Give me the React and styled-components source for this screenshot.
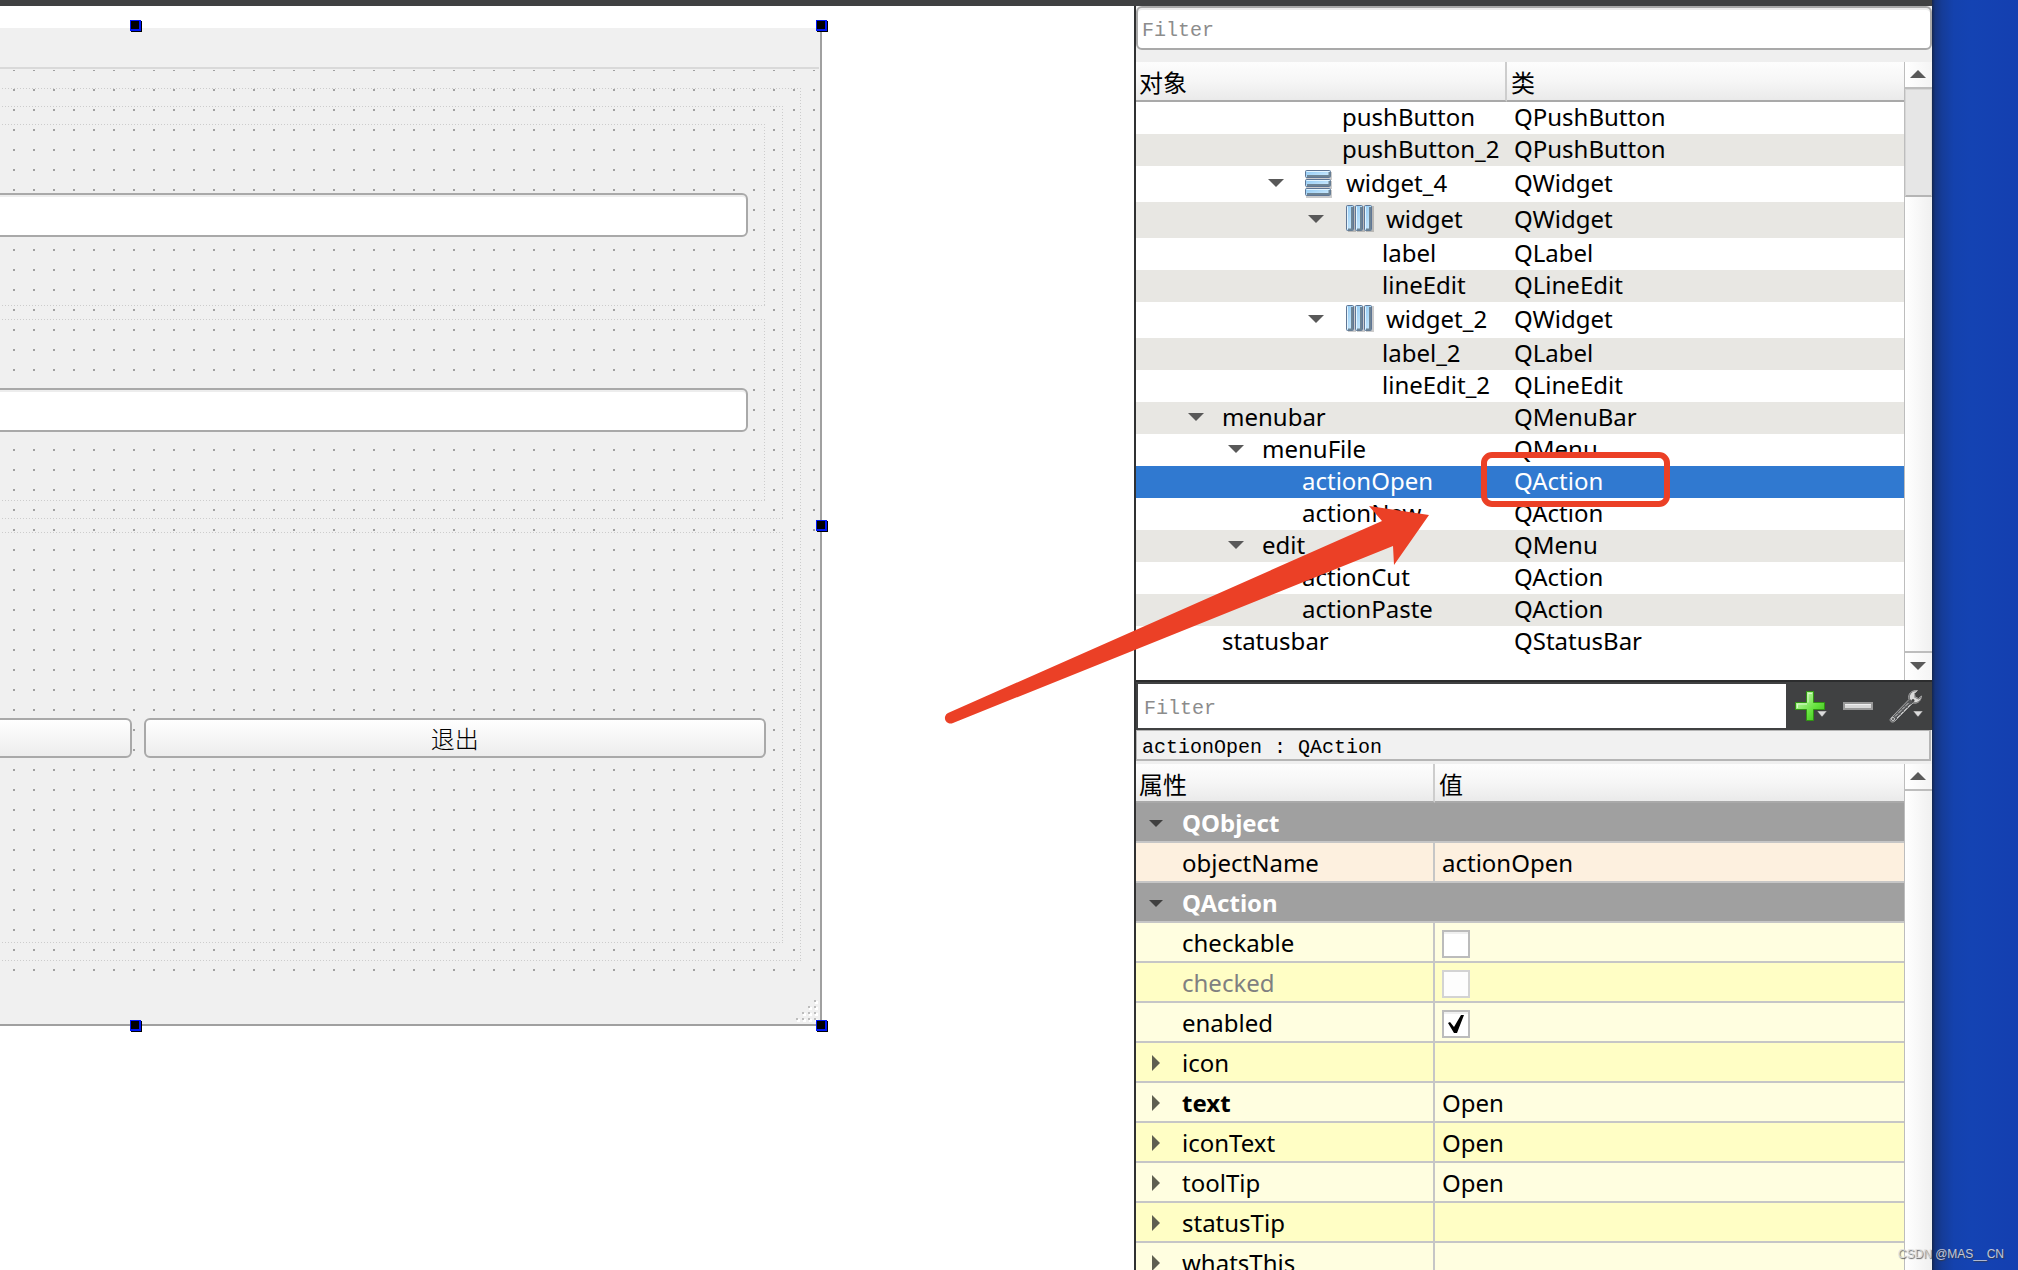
import React from "react";
import styled, { createGlobalStyle, css } from "styled-components";

const uiFont = `"Noto Sans", "Noto Sans CJK SC", sans-serif`;
const monoFont = `"Liberation Mono", "Noto Sans CJK SC", monospace`;

const GlobalStyle = createGlobalStyle`
  * {
    box-sizing: border-box;
  }

  body {
    margin: 0;
    font: 24px/32px ${uiFont};
    color: #000000;
  }
`;

const Page = styled.div`
  height: 100vh;
  overflow: hidden;
  position: relative;

  display: flex;

  background: #1442b2;
`;

const Window = styled.div`
  flex: 1;
  min-width: 0;

  display: flex;
  flex-direction: column;

  border-top: 6px solid #404142;
  background: #ffffff;
`;

const Workspace = styled.div`
  flex: 1;
  min-height: 0;

  display: flex;
`;

const Desktop = styled.div`
  width: 86px;
  flex-shrink: 0;

  background: linear-gradient(
    90deg,
    #14264f 0,
    #15347d 3px,
    #153c98 10px,
    #1442ae 22px,
    #1443b3 40px,
    #143fb0 100%
  );
`;

/* form being edited */

const Canvas = styled.main`
  flex: 1;
  min-width: 0;
  overflow: hidden;

  padding-top: 22px;
`;

const Form = styled.section`
  position: relative;
  width: 1370px;
  margin-left: -548px;

  border-right: 2px solid #a0a0a0;
  border-bottom: 2px solid #a0a0a0;
  background: #f0f0f0;
`;

const FormMenuBar = styled.div`
  height: 41px;
  margin-right: 1px;

  border-bottom: 2px solid #d9d9d9;
`;

const FormBody = styled.div`
  margin-top: 1px;
  padding: 18px 19px 17px 22px;

  background-image: conic-gradient(
    from 90deg at 18px 18px,
    #a0a0a0 90deg,
    transparent 90deg
  );
  background-size: 20px 20px;
  background-position: 3px 1px;
`;

const FormStatusBar = styled.div`
  height: 46px;

  display: flex;
  justify-content: flex-end;
  align-items: flex-end;

  background: #f0f0f0;
`;

const dottedLine = (angle) =>
  `linear-gradient(${angle}, #cccccc 1px, transparent 1px)`;

const LayoutFrame = styled.div`
  display: flex;
  flex-direction: ${(props) => (props.$row ? "row" : "column")};
  align-items: ${(props) => (props.$row ? "center" : "stretch")};
  gap: ${(props) => (props.$row ? 12 : 13)}px;

  height: ${(props) => (props.$height ? `${props.$height}px` : "auto")};
  padding: ${(props) => (props.$row ? "0 17px" : "18px")};

  background-image: ${dottedLine("90deg")}, ${dottedLine("90deg")},
    ${dottedLine("180deg")}, ${dottedLine("180deg")};
  background-size: 3px 1px, 3px 1px, 1px 3px, 1px 3px;
  background-position: left top, left bottom, left top, right top;
  background-repeat: repeat-x, repeat-x, repeat-y, repeat-y;
`;

const LineEdit = styled.input`
  width: 100%;
  height: 44px;
  padding: 4px 4px 0;

  border: 2px solid #a9a9a9;
  border-radius: 6px;
  outline: none;
  background: #ffffff;
  box-shadow: inset 0 2px 0 #ededed;

  font: 20px/24px ${monoFont};

  &::placeholder {
    color: #8c8c8c;
    opacity: 1;
  }
`;

const PushButton = styled.button`
  flex: 1;
  height: 40px;
  padding: 0;

  border: 2px solid #a9a9a9;
  border-radius: 6px;
  background: linear-gradient(#ffffff, #ededed);

  font: 300 24px/32px "Noto Sans CJK SC", sans-serif;
  color: #000000;
`;

const Handle = styled.span`
  position: absolute;
  width: 11px;
  height: 11px;
  margin: -6px;

  border: solid #0018f5;
  border-width: 1px 2px 2px 1px;
  background: #000000;
  box-shadow: 1px 1px 0 #000000;

  left: ${(props) => props.$left};
  top: ${(props) => props.$top};
`;

/* docked panels */

const Docks = styled.aside`
  position: relative;
  width: 798px;
  flex-shrink: 0;

  display: flex;
  flex-direction: column;

  border-left: 2px solid #303132;
  background: #efefef;
`;

const Inspector = styled.section`
  display: flex;
  height: 618px;
  margin-top: 12px;

  background: #ffffff;
`;

const PropertyEditor = styled.section`
  flex: 1;
  min-height: 0;
  overflow: hidden;

  display: flex;
  margin-top: 3px;
`;

const Scroller = styled.div`
  flex: 1;
  min-width: 0;
`;

const Table = styled.table`
  width: 100%;
  table-layout: fixed;
  border-collapse: separate;
  border-spacing: 0;
`;

const HeaderCell = styled.th`
  width: ${(props) => (props.$width ? `${props.$width}px` : "auto")};
  height: ${(props) => props.$height}px;
  padding: 2px 4px 0 ${(props) => (props.$width ? 3 : 4)}px;

  border-bottom: 2px solid #a9a9a9;
  ${(props) => props.$width && "border-right: 2px solid #cdcdcd;"}
  background: linear-gradient(#fdfdfd, #f6f6f6 50%, #eaeaea);

  font: 400 24px/32px "Noto Sans CJK SC", sans-serif;
  text-align: left;
`;

const TreeRow = styled.tr`
  height: ${(props) => (props.$tall ? 36 : 32)}px;

  background: ${(props) => (props.$striped ? "#e8e7e3" : "#ffffff")};

  ${(props) =>
    props.$selected &&
    css`
      background: #3079d0;
      color: #ffffff;
    `}
`;

const TreeCell = styled.td`
  padding: 0 0 0 7px;
  line-height: 30px;
  vertical-align: top;
  white-space: nowrap;
`;

const TreeName = styled.div`
  display: flex;
  align-items: center;
  height: ${(props) => (props.$tall ? 34 : 30)}px;
  padding-left: ${(props) => (props.$level - 1) * 40}px;
`;

const NameCell = styled(TreeCell)`
  padding: 0;
`;

const ClassCell = styled(TreeCell)`
  line-height: ${(props) => (props.$tall ? 34 : 30)}px;
`;

const Branch = styled.span`
  width: 40px;
  margin-right: 6px;

  display: flex;
  justify-content: center;
`;

const LayoutIcon = styled.svg`
  width: 32px;
  height: 32px;
  margin: 2px 10px 0 2px;
`;

const Track = styled.div`
  width: 28px;
  flex-shrink: 0;

  display: flex;
  flex-direction: column;

  border-left: 1px solid #bdbdbd;
  background: linear-gradient(90deg, #ffffff, #f0f0f0);
`;

const ScrollButton = styled.button`
  height: ${(props) => (props.$down ? 29 : 27)}px;
  padding: 0 2px 2px 0;

  display: flex;
  align-items: center;
  justify-content: center;

  border: solid #bdbdbd;
  border-width: ${(props) => (props.$down ? "2px 0 0" : "0 0 2px")};
  background: linear-gradient(90deg, #ffffff, #f4f4f4);
`;

const Thumb = styled.div`
  height: 108px;

  border: 1px solid #d6d6d6;
  border-bottom: 2px solid #b5b5b5;
  background: #e6e6e6;
`;

const Spacer = styled.div`
  flex: 1;
`;

const Toolbar = styled.div`
  display: flex;
  height: 50px;
  padding: 2px;

  border-top: 2px solid #2c2d2e;
  background: #404142;
`;

const ToolbarFilter = styled(LineEdit)`
  flex: 1;
  min-width: 0;
  width: auto;
  padding-left: 6px;

  border: 0;
  border-radius: 0;
  box-shadow: none;
`;

const ToolButton = styled.button`
  width: 48px;
  height: 44px;
  padding: 0;

  border: 0;
  background: none;

  svg {
    display: block;
  }
`;

const ObjectTitle = styled.div`
  height: 31px;
  margin-right: 1px;
  padding: 3px 5px 0;

  border: solid #b5b5b5;
  border-width: 1px 2px 2px 1px;
  background: #f1f1f1;

  font: 20px/28px ${monoFont};
  white-space: pre;
`;

const toneColors = {
  group: "#a0a0a0",
  peach: "#fdf0df",
  light: "#fffee0",
  dark: "#fffec5",
};

const PropertyRow = styled.tr`
  height: 40px;

  background: ${(props) => toneColors[props.$tone]};
  color: ${(props) => (props.$disabled ? "#808080" : "#000000")};
`;

const PropertyCell = styled.td`
  padding: 2px 0 0 ${(props) => (props.$value ? 7 : 0)}px;

  border-bottom: 2px solid #c6c6c6;
  ${(props) => props.$divided && "border-right: 2px solid #c6c6c6;"}
`;

const PropertyName = styled.div`
  display: flex;
  align-items: center;

  font-weight: ${(props) => (props.$bold ? 700 : 400)};
  color: ${(props) => (props.$group ? "#ffffff" : "inherit")};
`;

const Expander = styled.span`
  width: 40px;
  margin-right: 6px;

  display: flex;
  justify-content: center;
`;

const CheckBox = styled.input`
  appearance: none;
  display: block;
  width: 28px;
  height: 28px;
  margin: 2px 0 0;

  border: 2px solid #bcbcbc;
  background: #ffffff;
  box-shadow: inset 0 2px 0 #f0f0f0;

  &:disabled {
    border-color: #d3d3d3;
    background: #fdfdfd;
    box-shadow: none;
  }

  &:checked {
    background: #ffffff
      url("data:image/svg+xml,%3Csvg xmlns='http://www.w3.org/2000/svg' viewBox='0 0 24 24'%3E%3Cpath d='M4 11l2-1 4 5 7-12 3 0-7 18-3 0z'/%3E%3C/svg%3E");
  }
`;

const Markup = styled.svg`
  position: absolute;
  left: -200px;
  top: 434px;
  pointer-events: none;
`;

const Watermark = styled.span`
  position: absolute;
  right: 14px;
  bottom: 8px;

  font: 12px/16px "Liberation Sans", sans-serif;
  color: rgba(225, 225, 225, 0.85);
  text-shadow: 1px 1px 1px rgba(60, 60, 60, 0.8);
`;

const DownArrow = ({ width = 16, height = 8, color = "#595959" }) => (
  <svg width={width} height={height} viewBox="0 0 16 8" preserveAspectRatio="none">
    <path d="M0 0H16L8 8Z" fill={color} />
  </svg>
);

const UpArrow = () => (
  <svg width="16" height="8">
    <path d="M0 8H16L8 0Z" fill="#595959" />
  </svg>
);

const RightArrow = () => (
  <svg width="8" height="16">
    <path d="M0 0V16L8 8Z" fill="#5f5f50" />
  </svg>
);

function BoxIcon({ vertical }) {
  return (
    <LayoutIcon viewBox="0 0 32 32">
      <defs>
        <linearGradient id="bar" x1="0" y1="0" x2="1" y2="1">
          <stop offset="0" stopColor="#8cc8f4" />
          <stop offset="1" stopColor="#d8f0ff" />
        </linearGradient>
      </defs>
      <g transform={vertical ? undefined : "matrix(0 1 1 0 0 0)"}>
        {[3, 12, 21].map((y) => (
          <g key={y}>
            <rect x="2" y={y + 1} width="26" height="8" fill="#000000" opacity="0.2" />
            <rect
              x="1.5"
              y={y - 0.5}
              width="25"
              height="7"
              rx="1"
              fill="url(#bar)"
              stroke="#5f7695"
            />
            <path d={`M3 ${y + 5}H25.500V${y + 1}`} stroke="#6e8494" strokeWidth="2" fill="none" />
            <path d={`M2.500 ${y + 0.5}H25`} stroke="#e4f5ff" />
          </g>
        ))}
      </g>
    </LayoutIcon>
  );
}

const MenuCaret = ({ x }) => (
  <path d={`M${x} 27h10l-5 6z`} fill="#dcdcdc" stroke="#404142" strokeWidth="0.5" />
);

const PlusIcon = () => (
  <svg width="48" height="44">
    <defs>
      <linearGradient id="plus" x1="0" y1="0" x2="1" y2="1">
        <stop offset="0.2" stopColor="#b4f29a" />
        <stop offset="0.6" stopColor="#66e23e" />
        <stop offset="1" stopColor="#36b414" />
      </linearGradient>
    </defs>
    <path
      d="M20.500 7.500h7v11h11v7h-11v11h-7v-11h-11v-7h11z"
      fill="url(#plus)"
      stroke="#2f9412"
    />
    <path d="M22 18.500V9.500h4M11.500 24v-4H21" stroke="#d8f8cc" fill="none" />
    <MenuCaret x={31} />
  </svg>
);

const MinusIcon = () => (
  <svg width="48" height="44">
    <rect x="10" y="19" width="28" height="6" fill="#d8d8d8" stroke="#989898" strokeWidth="2" />
    <path d="M11 20.500H37" stroke="#f0f0f0" />
  </svg>
);

const WrenchIcon = () => (
  <svg width="48" height="44">
    <path
      d="M8.500 34.500L27 15.500C25.500 10.500 29 6 35.500 6.500L32.500 9.500L33 13L36.500 14.500L39.500 12C39 17.500 35 20 31 19L13 37C10 39.500 7 37 8.500 34.500Z"
      fill="#57585a"
      stroke="#a8a8a8"
      strokeWidth="1"
    />
    <path d="M28 15C27 10.500 30 7 35 7L32 9.500L32.500 13.500L36.500 15.500L39 13.500C37.500 18 34 19 31 18Z" fill="#dadada" />
    <path d="M13 32.500L27 18.500M15 34L29 20" stroke="#d0d0d0" strokeWidth="1" strokeDasharray="4 1" />
    <circle cx="31" cy="16.500" r="1.500" fill="#404142" />
    <circle cx="11" cy="35" r="1.500" fill="#404142" stroke="#d0d0d0" />
    <MenuCaret x={31} />
  </svg>
);

const objects = [
  { name: "pushButton", type: "QPushButton", level: 5 },
  { name: "pushButton_2", type: "QPushButton", level: 5 },
  { name: "widget_4", type: "QWidget", level: 4, open: true, icon: "vertical" },
  { name: "widget", type: "QWidget", level: 5, open: true, icon: "horizontal" },
  { name: "label", type: "QLabel", level: 6 },
  { name: "lineEdit", type: "QLineEdit", level: 6 },
  { name: "widget_2", type: "QWidget", level: 5, open: true, icon: "horizontal" },
  { name: "label_2", type: "QLabel", level: 6 },
  { name: "lineEdit_2", type: "QLineEdit", level: 6 },
  { name: "menubar", type: "QMenuBar", level: 2, open: true },
  { name: "menuFile", type: "QMenu", level: 3, open: true },
  { name: "actionOpen", type: "QAction", level: 4, selected: true },
  { name: "actionNew", type: "QAction", level: 4 },
  { name: "edit", type: "QMenu", level: 3, open: true },
  { name: "actionCut", type: "QAction", level: 4 },
  { name: "actionPaste", type: "QAction", level: 4 },
  { name: "statusbar", type: "QStatusBar", level: 2 },
];

const properties = [
  { name: "QObject", tone: "group" },
  { name: "objectName", tone: "peach", value: "actionOpen" },
  { name: "QAction", tone: "group" },
  { name: "checkable", tone: "light", check: true },
  { name: "checked", tone: "dark", check: true, disabled: true },
  { name: "enabled", tone: "light", check: true, checked: true },
  { name: "icon", tone: "dark", expandable: true },
  { name: "text", tone: "light", expandable: true, bold: true, value: "Open" },
  { name: "iconText", tone: "dark", expandable: true, value: "Open" },
  { name: "toolTip", tone: "light", expandable: true, value: "Open" },
  { name: "statusTip", tone: "dark", expandable: true },
  { name: "whatsThis", tone: "light", expandable: true },
];

function SizeGrip() {
  const dots = [
    [18, 0],
    [12, 6],
    [18, 6],
    [6, 12],
    [12, 12],
    [18, 12],
    [0, 18],
    [6, 18],
    [12, 18],
    [18, 18],
  ];

  return (
    <svg width="24" height="24">
      {dots.map(([x, y]) => (
        <g key={`${x}-${y}`}>
          <rect x={x + 1} y={y + 1} width="3" height="3" fill="#ffffff" />
          <rect x={x} y={y} width="2" height="2" fill="#bdbdbd" />
        </g>
      ))}
    </svg>
  );
}

function FormEditor() {
  return (
    <Canvas>
      <Form>
        <FormMenuBar />
        <FormBody>
          <LayoutFrame>
            <LayoutFrame>
              <LayoutFrame $row $height={182}>
                <LineEdit aria-label="lineEdit" />
              </LayoutFrame>
              <LayoutFrame $row $height={182}>
                <LineEdit aria-label="lineEdit_2" />
              </LayoutFrame>
            </LayoutFrame>
            <LayoutFrame $row $height={411}>
              <PushButton aria-label="pushButton" />
              <PushButton>退出</PushButton>
            </LayoutFrame>
          </LayoutFrame>
        </FormBody>
        <FormStatusBar>
          <SizeGrip />
        </FormStatusBar>
        <Handle $left="50%" $top="-2px" />
        <Handle $left="calc(100% + 2px)" $top="-2px" />
        <Handle $left="calc(100% + 2px)" $top="50%" />
        <Handle $left="50%" $top="calc(100% + 2px)" />
        <Handle $left="calc(100% + 2px)" $top="calc(100% + 2px)" />
      </Form>
    </Canvas>
  );
}

function ObjectInspector() {
  return (
    <Inspector>
      <Scroller>
        <Table>
          <thead>
            <tr>
              <HeaderCell $width={371} $height={40}>
                对象
              </HeaderCell>
              <HeaderCell $height={40}>类</HeaderCell>
            </tr>
          </thead>
          <tbody>
            {objects.map((item, index) => (
              <TreeRow
                key={item.name}
                $tall={Boolean(item.icon)}
                $striped={index % 2 === 1}
                $selected={item.selected}
              >
                <NameCell>
                  <TreeName $level={item.level} $tall={Boolean(item.icon)}>
                    <Branch>{item.open && <DownArrow />}</Branch>
                    {item.icon && <BoxIcon vertical={item.icon === "vertical"} />}
                    {item.name}
                  </TreeName>
                </NameCell>
                <ClassCell $tall={Boolean(item.icon)}>{item.type}</ClassCell>
              </TreeRow>
            ))}
          </tbody>
        </Table>
      </Scroller>
      <Track>
        <ScrollButton aria-label="Scroll up">
          <UpArrow />
        </ScrollButton>
        <Thumb />
        <Spacer />
        <ScrollButton $down aria-label="Scroll down">
          <DownArrow />
        </ScrollButton>
      </Track>
    </Inspector>
  );
}

function PropertyLine({ item }) {
  const group = item.tone === "group";

  return (
    <PropertyRow $tone={item.tone} $disabled={item.disabled}>
      <PropertyCell colSpan={group ? 2 : 1} $divided={!group}>
        <PropertyName $group={group} $bold={group || item.bold}>
          <Expander>
            {group && <DownArrow width={14} height={7} color="#404040" />}
            {item.expandable && <RightArrow />}
          </Expander>
          {item.check ? <label htmlFor={item.name}>{item.name}</label> : item.name}
        </PropertyName>
      </PropertyCell>
      {!group && (
        <PropertyCell $value>
          {item.check ? (
            <CheckBox
              type="checkbox"
              id={item.name}
              defaultChecked={item.checked}
              disabled={item.disabled}
            />
          ) : (
            item.value
          )}
        </PropertyCell>
      )}
    </PropertyRow>
  );
}

function App() {
  return (
    <Page>
      <GlobalStyle />
      <Window>
        <Workspace>
          <FormEditor />
          <Docks>
            <LineEdit placeholder="Filter" aria-label="Filter objects" />
            <ObjectInspector />
            <Toolbar>
              <ToolbarFilter placeholder="Filter" aria-label="Filter properties" />
              <ToolButton aria-label="Add property">
                <PlusIcon />
              </ToolButton>
              <ToolButton aria-label="Remove property">
                <MinusIcon />
              </ToolButton>
              <ToolButton aria-label="Configure">
                <WrenchIcon />
              </ToolButton>
            </Toolbar>
            <ObjectTitle>actionOpen : QAction</ObjectTitle>
            <PropertyEditor>
              <Scroller>
                <Table>
                  <thead>
                    <tr>
                      <HeaderCell $width={299} $height={39}>
                        属性
                      </HeaderCell>
                      <HeaderCell $height={39}>值</HeaderCell>
                    </tr>
                  </thead>
                  <tbody>
                    {properties.map((item) => (
                      <PropertyLine key={item.name} item={item} />
                    ))}
                  </tbody>
                </Table>
              </Scroller>
              <Track>
                <ScrollButton aria-label="Scroll properties up">
                  <UpArrow />
                </ScrollButton>
              </Track>
            </PropertyEditor>
            <Markup width="760" height="300" viewBox="936 440 760 300">
              <path
                d="M1429 515L1369 506L1382 521L948 713A5 5 0 0 0 953 723L1393 546L1394 565Z"
                fill="#eb4026"
              />
              <rect
                x="1484"
                y="455"
                width="183"
                height="49"
                rx="8"
                fill="none"
                stroke="#eb4026"
                strokeWidth="6"
              />
            </Markup>
          </Docks>
        </Workspace>
      </Window>
      <Desktop />
      <Watermark>CSDN @MAS__CN</Watermark>
    </Page>
  );
}

export default App;
